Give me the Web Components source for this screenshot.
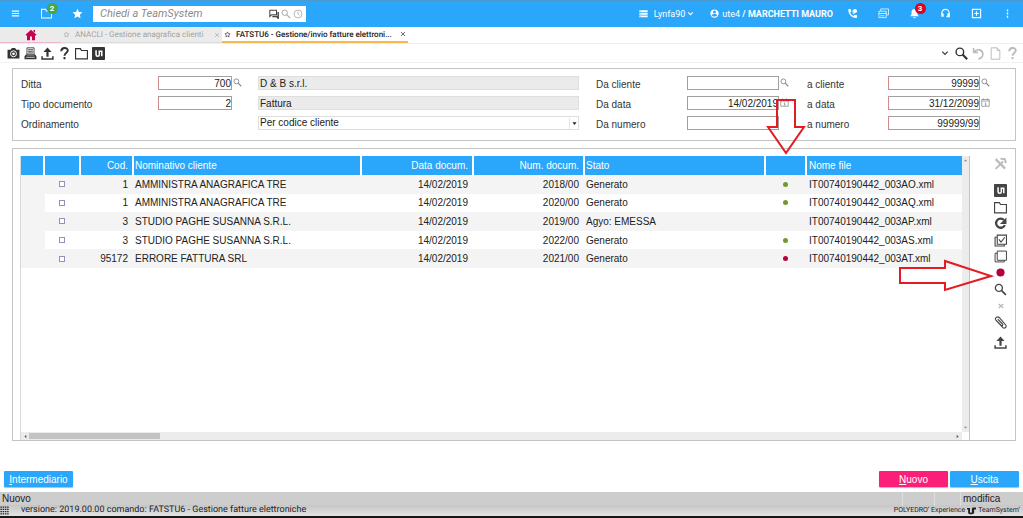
<!DOCTYPE html>
<html lang="it">
<head>
<meta charset="utf-8">
<title>FATSTU6 - Gestione/invio fatture elettroniche</title>
<style>
html,body{margin:0;height:100%}
body{font:10px/12px "Liberation Sans",Arial,sans-serif;color:#333;background:#fff}
</style>
</head>
<body>
<ts-app></ts-app>
<script>
const ICONS = {
  menu:'<path d="M4 7h16M4 12h16M4 17h16" stroke="currentColor" stroke-width="2.6"/>',
  folder:'<path d="M1 3h9l2 3.500h11V22H1z" fill="none" stroke="currentColor" stroke-width="2.200"/>',
  star:'<path d="M12 1.500l3.200 7.100 7.600.8-5.700 5.200 1.600 7.700L12 18.400l-6.700 3.900 1.600-7.700L1.200 9.400l7.600-.8z" fill="currentColor"/>',
  starline:'<path d="M12 3l2.600 6 6.400.6-4.800 4.300 1.400 6.400L12 17l-5.600 3.300 1.400-6.400L3 9.600 9.400 9z" fill="none" stroke="currentColor" stroke-width="2"/>',
  chat:'<path d="M2 3h16v11H6l-4 4z" fill="none" stroke="currentColor" stroke-width="2.500"/><path d="M22 7v15l-4-4H8" fill="none" stroke="currentColor" stroke-width="3.500"/>',
  search:'<circle cx="9" cy="9" r="6.500" fill="none" stroke="currentColor" stroke-width="2.400"/><path d="M14 14l8 8" stroke="currentColor" stroke-width="3"/>',
  searchbold:'<circle cx="9" cy="9" r="7" fill="none" stroke="currentColor" stroke-width="2.600"/><path d="M14 14l8.500 8.500" stroke="currentColor" stroke-width="4"/>',
  clock:'<circle cx="12" cy="12" r="9.500" fill="none" stroke="currentColor" stroke-width="2"/><path d="M12 6v6l4 3" fill="none" stroke="currentColor" stroke-width="2"/>',
  server:'<path d="M1 3h22v5H1zM1 10h22v5H1zM1 17h22v5H1z" fill="currentColor"/><path d="M4 5.500h2M4 12.500h2M4 19.500h2" stroke="#2aa7fa" stroke-width="2"/>',
  chevron:'<path d="M4 8l8 8 8-8" fill="none" stroke="currentColor" stroke-width="3.600"/>',
  person:'<circle cx="12" cy="12" r="11" fill="currentColor"/><circle cx="12" cy="8" r="4" fill="#2aa7fa"/><path d="M4.500 16.500c2-4 13-4 15 0-3 5-12 5-15 0z" fill="#2aa7fa"/>',
  phone:'<path d="M3 2h5l1.500 6-3 2c1.500 3.500 4 6 7.500 7.500l2.500-3L22 16v5.500C11 23 2 13 3 2z" fill="currentColor"/><circle cx="17.500" cy="6.500" r="4.500" fill="currentColor"/><path d="M13 4v8h4" fill="none" stroke="currentColor" stroke-width="1.500"/>',
  cards:'<path d="M6 6V2h17v13h-4M2 7h16v14H2zM2 12h16M5 17h9" fill="none" stroke="currentColor" stroke-width="1.600"/>',
  bell:'<path d="M12 2c4.500 0 6.500 3 6.500 7v5l3 4h-19l3-4V9c0-4 2-7 6.500-7zM9 20h6c0 3-6 3-6 0z" fill="currentColor"/>',
  headset:'<path d="M4 14v-3a8 8 0 0116 0v8h-6" fill="none" stroke="currentColor" stroke-width="2.600"/><path d="M3 12h5v7H3zM16 12h5v7h-5z" fill="currentColor"/>',
  exit:'<path d="M3 3h18v18H3zM7 12h10M12 7v10" fill="none" stroke="currentColor" stroke-width="2.400"/>',
  dots:'<path d="M10.500 3h3v4h-3zM10.500 10h3v4h-3zM10.500 17h3v4h-3z" fill="currentColor"/>',
  home:'<path d="M12 1.500l11 10-1.500 1.500H20v9.500h-6V15h-4v7.500H4V13H2.500L1 11.500zM17 2h3v5l-3-2z" fill="currentColor"/>',
  close:'<path d="M4 4l16 16M20 4L4 20" stroke="currentColor" stroke-width="2.600"/>',
  closebold:'<path d="M3 4l18 16M21 4L3 20" stroke="currentColor" stroke-width="6"/>',
  camera:'<path d="M1 5h6l2-3h6l2 3h6v16H1z" fill="currentColor"/><circle cx="12" cy="12.500" r="5.500" fill="none" stroke="#fff" stroke-width="1.800"/><circle cx="12" cy="12.500" r="2.500" fill="#fff"/>',
  printer:'<path d="M5.500 1.500h13v12h-13zM7.500 5h9M7.500 8h9M7.500 11h9" fill="none" stroke="currentColor" stroke-width="1.600"/><path d="M5 12l-4 5v5.500h22V17l-4-5v3H5z" fill="currentColor"/><path d="M4 19h16" stroke="#fff" stroke-width="1.400"/>',
  upload:'<path d="M10 18V9H4.500L12 1l7.500 8H14v9z" fill="currentColor"/><path d="M2 17v5h20v-5" fill="none" stroke="currentColor" stroke-width="2.800"/>',
  help:'<path d="M6 8c0-8 12-8 12-1.500 0 4.500-6 4.500-6 9.500M12 18.500v4" fill="none" stroke="currentColor" stroke-width="3.600"/>',
  logo:'<rect width="24" height="24" rx="1.500" fill="currentColor"/><path d="M7.500 6v8.500c0 3.500 6 3.500 6 0V8H18v9" fill="none" stroke="#fff" stroke-width="2.800"/>',
  logoplain:'<path d="M0 5h8v10c0 4 5 4 5 0V8c0-2.500 1.500-4 4-4h7v5h-5v10l-5 3H7l-4-3V9H0z" fill="currentColor"/>',
  undo:'<path d="M3 2v8h8M4 9c5-7 16-4 16 4 0 5-3 8-8 9" fill="none" stroke="currentColor" stroke-width="3"/>',
  page:'<path d="M4 1.500h11l5 5v16H4zM15 1.500v5h5" fill="none" stroke="currentColor" stroke-width="1.800"/>',
  calendar:'<path d="M2 4h20v18H2zM2 8h20" fill="none" stroke="currentColor" stroke-width="2"/><path d="M7 1v4M17 1v4M10 13h2.500v6M10 19h5" fill="none" stroke="currentColor" stroke-width="2"/>',
  tools:'<path d="M4 2l18 18-3 3L2 6z" fill="currentColor"/><path d="M3 22L17 8M12 3l8 1 2 7" fill="none" stroke="currentColor" stroke-width="3.600"/>',
  refresh:'<path d="M18.500 5.500A8.500 8.500 0 1020 15" fill="none" stroke="currentColor" stroke-width="4.200"/><path d="M23 1v12H11z" fill="currentColor"/>',
  checks:'<path d="M6 2h17v17H6zM6 6H2v16h17v-3M9 10l4 5 7-9" fill="none" stroke="currentColor" stroke-width="2"/>',
  copies:'<path d="M6 2h17v17H6zM6 6H2v16h17v-3" fill="none" stroke="currentColor" stroke-width="1.800"/>',
  dot:'<circle cx="12" cy="12" r="7.500" fill="currentColor"/>',
  clip:'<path d="M3 7l13 14c3 3 8 0 6-4L10 3C7 0 1 3 3 7l10 10c2 2 4 0 3-2L7 6" fill="none" stroke="currentColor" stroke-width="2"/>',
  caret:'<path d="M5 8h14l-7 9z" fill="currentColor"/>',
  left:'<path d="M16 4v16l-9-8z" fill="currentColor"/>',
  right:'<path d="M8 4v16l9-8z" fill="currentColor"/>',
  up:'<path d="M4 16h16l-8-9z" fill="currentColor"/>',
  down:'<path d="M4 8h16l-8 9z" fill="currentColor"/>',
  keypad:'<path d="M1 3h22M1 9h22M1 15h22M1 21h22" stroke="currentColor" stroke-width="3.600" stroke-dasharray="4 2"/>'
};

function define(name, html, setup) {
  const tpl = document.createElement('template');
  tpl.innerHTML = html;
  customElements.define(name, class extends HTMLElement {
    connectedCallback() {
      if (this.shadowRoot) return;
      this.attachShadow({mode:'open'}).append(tpl.content.cloneNode(true));
      if (setup) setup(this, this.shadowRoot);
    }
  });
}

define('ts-icon', `<style>:host{display:block;flex:none;width:var(--size,12px);height:var(--size,12px)}svg{display:block;width:100%;height:100%}</style><svg viewBox="0 0 24 24" aria-hidden="true"></svg>`,
  (el, root) => { root.querySelector('svg').innerHTML = ICONS[el.getAttribute('name')]; });

/* Icon button; an optional counter is shown over its top right corner. */
define('ts-tool', `<style>
:host{display:grid;flex:none}
button{position:relative;display:grid;place-items:center;border:0;padding:0;background:none;color:inherit;font:inherit}
.badge{position:absolute;left:50%;bottom:50%;box-sizing:border-box;min-width:11px;height:11px;border-radius:6px;background:var(--badge,#e2001a);color:#fff;font:bold 8px/11px Roboto,sans-serif;text-align:center}
.badge:empty{display:none}
</style><button type="button"><span class="badge"></span></button>`,
  (el, root) => {
    const button = root.querySelector('button');
    const icon = document.createElement('ts-icon');
    icon.setAttribute('name', el.getAttribute('icon'));
    button.prepend(icon);
    button.setAttribute('aria-label', el.getAttribute('label') || el.getAttribute('icon'));
    root.querySelector('.badge').textContent = el.getAttribute('count') || '';
  });

define('ts-header', `<style>
:host{display:flex;align-items:center;height:27px;background:#2aa7fa;color:#fff;font-family:Roboto,sans-serif;font-size:9px;box-shadow:inset 0 1px #4a9ad0}
nav{display:grid;grid-auto-flow:column;grid-auto-columns:31px;--size:11px}
.search{display:flex;align-items:center;gap:2px;box-sizing:border-box;width:213px;height:16px;padding:0 3px 0 7px;background:#fff;color:#aaa;--size:10px}
input{flex:1;min-width:0;border:0;padding:0;outline:0;background:none;font:italic 11px/16px Roboto,sans-serif}
input::placeholder{color:#8c8c8c;opacity:1}
.dark{color:#444}
.user{display:flex;align-items:center;margin-left:auto;--size:9px}
.user>span{margin-left:6px}
.chev{--size:7px;margin:0 16px 0 2px}
.server{margin-right:1px}
.user .who{margin-left:3px;margin-right:4px}
</style>
<nav><ts-tool icon="menu"></ts-tool><ts-tool icon="folder" count="2" style="--badge:#47a447"></ts-tool><ts-tool icon="star"></ts-tool></nav>
<div class="search"><input type="search" aria-label="Cerca" placeholder="Chiedi a TeamSystem"><ts-icon class="dark" name="chat"></ts-icon><ts-icon name="search"></ts-icon><ts-icon name="clock"></ts-icon></div>
<div class="user"><ts-icon name="server"></ts-icon><span>Lynfa90</span><ts-icon class="chev" name="chevron"></ts-icon><ts-icon name="person"></ts-icon><span class="who">ute4 <b>/ MARCHETTI MAURO</b></span></div>
<nav><ts-tool icon="phone"></ts-tool><ts-tool icon="cards"></ts-tool><ts-tool icon="bell" count="3"></ts-tool><ts-tool icon="headset"></ts-tool><ts-tool icon="exit"></ts-tool><ts-tool icon="dots"></ts-tool></nav>`);

define('ts-tab', `<style>
:host{display:flex;align-items:center;gap:5px;box-sizing:border-box;height:16px;padding:0 2px;background:#ebebeb;color:#a3a3a3;border-bottom:1px solid #ddd;font:8px/15px Roboto,sans-serif;text-rendering:geometricPrecision;--size:7px}
:host([active]){background:#fff;color:#222;font-weight:500;border-bottom:2px solid #f8b84e}
a{flex:1;min-width:0;color:inherit;text-decoration:none;white-space:nowrap}
</style><ts-icon name="starline"></ts-icon><a href="#"><slot></slot></a><ts-icon name="close" style="--size:6px"></ts-icon>`);

define('ts-tabs', `<style>
:host{display:flex;height:16px;border-bottom:1px solid #efefef}
.home{display:grid;place-items:center;box-sizing:border-box;width:61px;background:#ebebeb;color:#c4004f;border-bottom:1px solid #efb6cf;--size:12px}
.t1{width:161px}
.t2{width:186px}
</style><a class="home" href="#" aria-label="Home"><ts-icon name="home"></ts-icon></a><ts-tab class="t1">ANACLI - Gestione anagrafica clienti</ts-tab><ts-tab class="t2" active>FATSTU6 - Gestione/invio fatture elettroni...</ts-tab>`);

define('ts-toolbar', `<style>
:host{display:flex;justify-content:space-between;box-sizing:border-box;height:19px;padding:0 2px 0 5px;border-bottom:1px solid #f2f2f2;color:#333;--size:13px}
div{display:grid;grid-auto-flow:column;grid-auto-columns:17px}
.off{color:#bbb}
.small{--size:8px}
</style>
<div><ts-tool icon="camera"></ts-tool><ts-tool icon="printer"></ts-tool><ts-tool icon="upload"></ts-tool><ts-tool icon="help"></ts-tool><ts-tool icon="folder"></ts-tool><ts-tool icon="logo"></ts-tool></div>
<div><ts-tool class="small" icon="chevron"></ts-tool><ts-tool icon="searchbold"></ts-tool><ts-tool class="off" icon="undo"></ts-tool><ts-tool class="off" icon="page"></ts-tool><ts-tool class="off" icon="help"></ts-tool></div>`);

define('ts-filters', `<style>
:host{display:block;border:1px solid #c4c4c4;padding:7px 8px 4px}
form{display:grid;grid-template-columns:137px 74px 26px minmax(100px,1fr) 17px 91px 92px 28px 81px 92px 27px;grid-auto-rows:20px;align-items:start;margin:0}
label{line-height:18px;color:#333}
input,select{box-sizing:border-box;width:100%;height:14px;margin:0;border:1px solid #999;border-radius:0;padding:0;background:#fff;color:#222;font:inherit;line-height:12px;outline:0}
.num{text-align:right;border-color:#a5a0a0;border-left-color:#d08a8a}
.text{grid-column:4;background:#ebebeb;border-color:#dedede;padding-left:1px}
.pick{grid-column:4;display:grid}
.pick>*{grid-area:1/1}
select{appearance:none;border-color:#dedede;padding-left:1px}
ts-icon{--size:9px;margin:2px 1px;color:#888}
.pick ts-icon{justify-self:end;align-self:center;pointer-events:none;color:#222;--size:7px;margin:0;padding:2px 1px;border-left:1px solid #e4e4e4}
.c6{grid-column:6}.c7{grid-column:7}.c9{grid-column:9}.c10{grid-column:10}
</style>
<form>
<label for="ditta">Ditta</label><input class="num" id="ditta" value="700"><ts-icon name="search"></ts-icon><input class="text" aria-label="Ragione sociale" value="D &amp; B s.r.l." readonly>
<label class="c6" for="dac">Da cliente</label><input class="num c7" id="dac"><ts-icon name="search"></ts-icon><label class="c9" for="ac">a cliente</label><input class="num c10" id="ac" value="99999"><ts-icon name="search"></ts-icon>
<label for="tipo">Tipo documento</label><input class="num" id="tipo" value="2"><input class="text" aria-label="Descrizione tipo" value="Fattura" readonly>
<label class="c6" for="dad">Da data</label><input class="num c7" id="dad" value="14/02/2019"><ts-icon name="calendar"></ts-icon><label class="c9" for="ad">a data</label><input class="num c10" id="ad" value="31/12/2099"><ts-icon name="calendar"></ts-icon>
<label for="ord" style="grid-column:1">Ordinamento</label><div class="pick"><select id="ord"><option>Per codice cliente</option></select><ts-icon name="caret"></ts-icon></div>
<label class="c6" for="dan">Da numero</label><input class="num c7" id="dan"><label class="c9" for="an">a numero</label><input class="num c10" id="an" value="99999/99">
</form>`);

const INVOICES = [
  ['1','AMMINISTRA ANAGRAFICA TRE','14/02/2019','2018/00','Generato','ok','IT00740190442_003AO.xml'],
  ['1','AMMINISTRA ANAGRAFICA TRE','14/02/2019','2020/00','Generato','ok','IT00740190442_003AQ.xml'],
  ['3','STUDIO PAGHE SUSANNA S.R.L.','14/02/2019','2019/00','Agyo: EMESSA','','IT00740190442_003AP.xml'],
  ['3','STUDIO PAGHE SUSANNA S.R.L.','14/02/2019','2022/00','Generato','ok','IT00740190442_003AS.xml'],
  ['95172','ERRORE FATTURA SRL','14/02/2019','2021/00','Generato','ko','IT00740190442_003AT.xml']
];

define('ts-grid', `<style>
:host{display:grid;grid-template:1fr 8px / 1fr 7px;border-left:1px solid #d9d9d9;border-right:1px solid #c4c4c4}
table{width:100%;height:112px;border-collapse:separate;border-spacing:0;table-layout:fixed}
th,td{padding:0 4px 0 1px;line-height:17px;font-weight:normal;text-align:left;white-space:nowrap;color:#222;overflow:hidden}
th{height:19px;line-height:19px;background:#2aa7fa;color:#fff;border-right:2px solid #fff}
td{border-right:2px solid transparent}
th:last-child,td:last-child{border-right:0;padding-left:2px}
tr:nth-child(odd) td,td:first-child{background:#f4f4f4}
.r{text-align:right}
td.c{text-align:center;padding:0}
input{appearance:none;display:block;width:6px;height:6px;margin:0 auto;border:1px solid #8c95bd;background:#fff;box-sizing:border-box}
i{display:block;width:5px;height:5px;margin:0 auto;border-radius:50%}
.ok{background:#74982f}
.ko{background:#b5003c}
.v{display:flex;flex-direction:column;justify-content:space-between;align-items:center;background:#ececec;color:#888;--size:5px;padding:2px 0}
.h{grid-column:1/-1;display:flex;align-items:center;margin-right:7px;background:#ececec;color:#555;--size:5px;padding:0 2px}
.h b{width:14%;height:6px;margin:0 auto 0 1px;background:#c3c3c3}
</style>
<div><table><colgroup><col style="width:24px"><col style="width:36px"><col style="width:53px"><col style="width:228px"><col style="width:112px"><col style="width:111px"><col style="width:181px"><col style="width:41px"><col></colgroup>
<thead><tr><th></th><th></th><th class="r">Cod.</th><th>Nominativo cliente</th><th class="r">Data docum.</th><th class="r">Num. docum.</th><th>Stato</th><th></th><th>Nome file</th></tr></thead><tbody></tbody></table></div>
<div class="v"><ts-icon name="up"></ts-icon><ts-icon name="down"></ts-icon></div>
<div class="h"><ts-icon name="left"></ts-icon><b></b><ts-icon name="right"></ts-icon></div>`,
  (el, root) => {
    root.querySelector('tbody').innerHTML = INVOICES.map(r => `<tr><td></td><td class="c"><input type="checkbox" aria-label="Seleziona ${r[3]}"></td><td class="r">${r[0]}</td><td>${r[1]}</td><td class="r">${r[2]}</td><td class="r">${r[3]}</td><td>${r[4]}</td><td class="c">${r[5] ? `<i class="${r[5]}"></i>` : ''}</td><td>${r[6]}</td></tr>`).join('');
  });

define('ts-side', `<style>
:host{display:grid;grid-template-rows:27px 17px 16px 17px 16px 16px 17px 17px 16px 17px 22px;align-content:start;width:29px;padding-left:16px;color:#444;--size:13px}
.off{color:#bbb}
.first{padding-bottom:10px}
.dot{color:#b5003c}
</style>
<ts-tool class="off first" icon="tools"></ts-tool><ts-tool icon="logo"></ts-tool><ts-tool icon="folder"></ts-tool><ts-tool icon="refresh"></ts-tool><ts-tool icon="checks"></ts-tool><ts-tool icon="copies"></ts-tool><ts-tool class="dot" icon="dot"></ts-tool><ts-tool icon="search"></ts-tool><ts-tool class="off" icon="closebold" style="--size:6px"></ts-tool><ts-tool icon="clip"></ts-tool><ts-tool icon="upload"></ts-tool>`);

define('ts-button', `<style>
:host{display:block;width:69px}
button{display:block;width:100%;height:16px;border:0;border-radius:1px;padding:0;background:var(--fill,#2aa7fa);color:#fff;font:inherit;line-height:15px;box-shadow:0 1px 1px #bbb}
</style><button type="button"><slot></slot></button>`);

define('ts-status', `<style>
:host{display:block;border-bottom:2px solid #161616;color:#222}
.top{display:grid;grid-template-columns:1fr 32px 26px 63px;height:13px;line-height:14px;background:#cdcdcd}
.top span{padding-left:2px;border-left:1px solid #dedede}
.top span:first-child{border:0;padding-left:2px}
.low{display:flex;align-items:center;height:11px;background:linear-gradient(#c6c6c6,#e2e2e2);font:8px/13px Roboto,sans-serif;text-rendering:geometricPrecision;padding-right:3px}
.low ts-icon{--size:9px}
.low .ver{margin:0 auto 0 12px;font-size:9px}
.brand{display:flex;align-items:center;gap:2px;font-size:7px}
</style>
<div class="top"><span>Nuovo</span><span></span><span></span><span>modifica</span></div>
<div class="low"><ts-icon name="keypad"></ts-icon><span class="ver">versione: 2019.00.00 comando: FATSTU6 - Gestione fatture elettroniche</span><span class="brand">POLYEDRO’ Experience <ts-icon name="logoplain"></ts-icon> TeamSystem’</span></div>`);

define('ts-app', `<style>
:host{display:flex;flex-direction:column;min-height:100vh;position:relative}
ts-filters{margin:5px 7px 7px 12px}
.panel{flex:1;display:flex;margin:0 7px 30px 12px;border:1px solid #c4c4c4;min-height:200px}
ts-grid{flex:1;min-width:0;margin:7px 0 0 7px}
ts-side{padding-top:6px}
.actions{display:flex;gap:2px;padding:0 4px 5px}
.actions ts-button:nth-child(2){margin-left:auto;--fill:#fc1f77}
svg{position:absolute;fill:none;stroke:#e31b23;stroke-width:2;pointer-events:none}
.down{top:98px;right:217px}
.across{top:259px;right:29px}
</style>
<ts-header></ts-header><ts-tabs></ts-tabs><ts-toolbar></ts-toolbar>
<ts-filters></ts-filters>
<div class="panel"><ts-grid></ts-grid><ts-side></ts-side></div>
<div class="actions"><ts-button><u>I</u>ntermediario</ts-button><ts-button><u>N</u>uovo</ts-button><ts-button><u>U</u>scita</ts-button></div>
<ts-status></ts-status>
<svg class="down" width="40" height="58" viewBox="0 0 40 58"><path d="M11 2h18v27h9L20 55 2 29h9z"/></svg>
<svg class="across" width="96" height="34" viewBox="0 0 96 34"><path d="M2 9h45V2l46 15-46 14v-7H2z"/></svg>`);
</script>
</body>
</html>
